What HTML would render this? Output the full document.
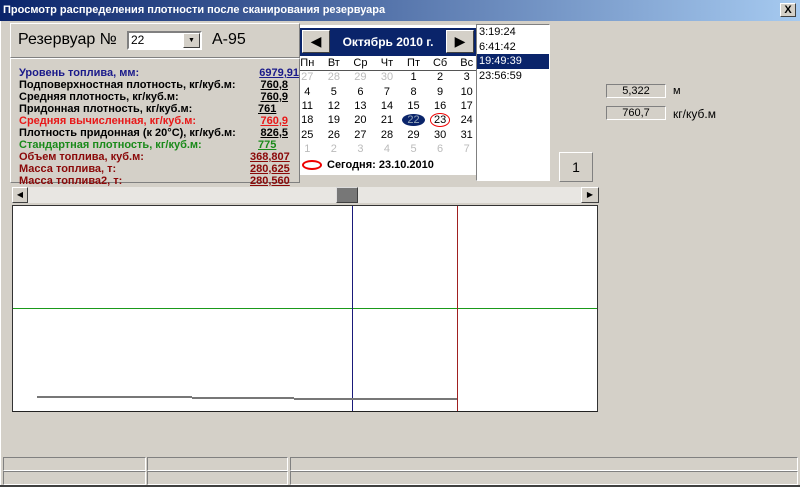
<!DOCTYPE html>
<html><head><meta charset="utf-8"><style>
*{margin:0;padding:0;box-sizing:border-box}
body{width:800px;height:487px;background:#d4d0c8;font-family:"Liberation Sans","DejaVu Sans",sans-serif;position:relative;overflow:hidden;font-size:11px}
.a{position:absolute}
.title{left:0;top:0;width:800px;height:21px;background:linear-gradient(90deg,#0a246a,#a6caf0);color:#fff;font-weight:bold;font-size:11px;line-height:20px;padding-left:3px}
.x{right:4px;top:3px;width:16px;height:14px;background:#d4d0c8;border:1px solid;border-color:#fff #404040 #404040 #fff;color:#000;font-weight:bold;text-align:center;line-height:12px;font-size:11px}
.r{font-weight:bold;font-size:11px;line-height:12px;white-space:nowrap}
.v{text-decoration:underline;text-align:right;width:38px}
.cal td{width:26.5px;text-align:center;height:14.3px;font-size:11px;padding:0}
.sunk{border:1px solid;border-color:#808080 #fff #fff #808080}
.sb{border:1px solid;border-color:#808080 #fff #fff #808080;height:14px}
</style></head><body>
<div class="a title">Просмотр распределения плотности после сканирования резервуара<div class="a x">X</div></div>
<div class="a" style="left:0;top:21px;width:3px;height:466px;background:#d4d0c8;border-left:1px solid #fff"></div>
<div class="a" style="left:10px;top:23px;width:290px;height:35px;border:1px solid;border-color:#fff #808080 #808080 #fff"></div>
<div class="a" style="left:18px;top:31px;font-size:16px">Резервуар №</div>
<div class="a" style="left:127px;top:31px;width:75px;height:19px;background:#fff;border:2px solid;border-color:#808080 #fff #fff #808080;font-size:12px;padding-left:2px;line-height:15px">22
<div class="a" style="right:0;top:0;width:17px;height:15px;background:#d4d0c8;border:1px solid;border-color:#fff #404040 #404040 #fff;font-size:7px;text-align:center;line-height:14px">▼</div></div>
<div class="a" style="left:212px;top:31px;font-size:16px">А-95</div>
<div class="a" style="left:10px;top:58px;width:290px;height:125px;border:1px solid;border-color:#fff #808080 #808080 #fff"></div>
<div class="a" style="left:19px;top:67px">
<div class="r" style="color:#1a1a8a">Уровень топлива, мм:</div>
<div class="r">Подповерхностная плотность, кг/куб.м:</div>
<div class="r">Средняя плотность, кг/куб.м:</div>
<div class="r">Придонная плотность, кг/куб.м:</div>
<div class="r" style="color:#e81818">Средняя вычисленная, кг/куб.м:</div>
<div class="r">Плотность придонная (к 20°С), кг/куб.м:</div>
<div class="r" style="color:#1a8a1a">Стандартная плотность, кг/куб.м:</div>
<div class="r" style="color:#8a0808">Объем топлива, куб.м:</div>
<div class="r" style="color:#8a0808">Масса топлива, т:</div>
<div class="r" style="color:#8a0808">Масса топлива2, т:</div>
</div>
<div class="a" style="left:250px;top:67px">
<div class="r v" style="color:#1a1a8a;width:49px">6979,91</div>
<div class="r v">760,8</div>
<div class="r v">760,9</div>
<div class="r v" style="text-align:left;padding-left:8px">761</div>
<div class="r v" style="color:#e81818">760,9</div>
<div class="r v">826,5</div>
<div class="r v" style="color:#1a8a1a;text-align:left;padding-left:8px">775</div>
<div class="r v" style="color:#8a0808">368,807</div>
<div class="r v" style="color:#8a0808">280,625</div>
<div class="r v" style="color:#8a0808">280,560</div>
</div>
<div class="a" style="left:300px;top:25px;width:176px;height:150px;background:#fff"></div>
<div class="a" style="left:300px;top:28px;width:176px;height:28px;background:#0a246a"></div>
<div class="a" style="left:302px;top:30px;width:28px;height:23px;background:#d4d0c8;border:1px solid;border-color:#fff #404040 #404040 #fff;font-size:14px;text-align:center;line-height:21px">◀</div>
<div class="a" style="left:446px;top:30px;width:28px;height:23px;background:#d4d0c8;border:1px solid;border-color:#fff #404040 #404040 #fff;font-size:14px;text-align:center;line-height:21px">▶</div>
<div class="a" style="left:330px;top:35px;width:116px;text-align:center;color:#fff;font-weight:bold;font-size:12px">Октябрь 2010 г.</div>
<div class="a" style="left:300px;top:70px;width:176px;height:1px;background:#555"></div>
<table class="a cal" style="left:294px;top:56px;border-collapse:collapse;width:186px">
<tr><td>Пн</td><td>Вт</td><td>Ср</td><td>Чт</td><td>Пт</td><td>Сб</td><td>Вс</td></tr>
<tr style="color:#bbb"><td>27</td><td>28</td><td>29</td><td>30</td><td style="color:#000">1</td><td style="color:#000">2</td><td style="color:#000">3</td></tr>
<tr><td>4</td><td>5</td><td>6</td><td>7</td><td>8</td><td>9</td><td>10</td></tr>
<tr><td>11</td><td>12</td><td>13</td><td>14</td><td>15</td><td>16</td><td>17</td></tr>
<tr><td>18</td><td>19</td><td>20</td><td>21</td><td><span style="background:#0a246a;color:#9ab;border-radius:50%;padding:0 5px">22</span></td><td><span style="border:1.5px solid #e00;border-radius:50%;padding:0 3px">23</span></td><td>24</td></tr>
<tr><td>25</td><td>26</td><td>27</td><td>28</td><td>29</td><td>30</td><td>31</td></tr>
<tr style="color:#bbb"><td>1</td><td>2</td><td>3</td><td>4</td><td>5</td><td>6</td><td>7</td></tr>
</table>
<div class="a" style="left:302px;top:160px;width:20px;height:10px;border:2px solid #e00;border-radius:50%"></div>
<div class="a" style="left:327px;top:159px;font-weight:bold;font-size:11px">Сегодня: 23.10.2010</div>
<div class="a" style="left:476px;top:24px;width:74px;height:157px;background:#fff;border:1px solid;border-color:#808080 #fff #fff #808080;font-size:11px;line-height:14.5px">
<div style="padding-left:2px">3:19:24</div><div style="padding-left:2px">6:41:42</div>
<div style="padding-left:2px;background:#0a246a;color:#fff">19:49:39</div><div style="padding-left:2px">23:56:59</div></div>
<div class="a" style="left:559px;top:152px;width:34px;height:30px;border:1px solid;border-color:#fff #808080 #808080 #fff;font-size:14px;text-align:center;line-height:28px">1</div>
<div class="a sunk" style="left:606px;top:84px;width:60px;height:14px;text-align:center;font-size:11px;line-height:12px">5,322</div>
<div class="a" style="left:673px;top:85px;font-size:11px">м</div>
<div class="a sunk" style="left:606px;top:106px;width:60px;height:14px;text-align:center;font-size:11px;line-height:12px">760,7</div>
<div class="a" style="left:673px;top:107px;font-size:12px">кг/куб.м</div>
<div class="a" style="left:12px;top:187px;width:587px;height:16px;background:#e8e6e2"></div>
<div class="a" style="left:12px;top:187px;width:16px;height:16px;background:#d4d0c8;border:1px solid;border-color:#fff #404040 #404040 #fff;font-size:8px;text-align:center;line-height:14px">◀</div>
<div class="a" style="left:581px;top:187px;width:18px;height:16px;background:#d4d0c8;border:1px solid;border-color:#fff #404040 #404040 #fff;font-size:8px;text-align:center;line-height:14px">▶</div>
<div class="a" style="left:336px;top:187px;width:22px;height:16px;background:#777;border:1px solid;border-color:#ddd #404040 #404040 #ddd"></div>
<div class="a" style="left:12px;top:205px;width:586px;height:207px;background:#fff;border:1px solid #333;border-color:#333 #333 #222 #333"></div>
<div class="a" style="left:13px;top:308px;width:584px;height:1px;background:#1a9a1a"></div>
<div class="a" style="left:352px;top:206px;width:1px;height:205px;background:#1a1a7a"></div>
<div class="a" style="left:457px;top:206px;width:1px;height:205px;background:#a02020"></div>
<div class="a" style="left:37px;top:396px;width:155px;height:2px;background:#777"></div>
<div class="a" style="left:192px;top:397px;width:102px;height:2px;background:#777"></div>
<div class="a" style="left:294px;top:398px;width:163px;height:2px;background:#777"></div>
<div class="a sb" style="left:3px;top:457px;width:143px"></div>
<div class="a sb" style="left:147px;top:457px;width:141px"></div>
<div class="a sb" style="left:290px;top:457px;width:508px"></div>
<div class="a sb" style="left:3px;top:471px;width:143px"></div>
<div class="a sb" style="left:147px;top:471px;width:141px"></div>
<div class="a sb" style="left:290px;top:471px;width:508px"></div>
<div class="a" style="left:0;top:485px;width:800px;height:2px;background:#404040"></div>
</body></html>
